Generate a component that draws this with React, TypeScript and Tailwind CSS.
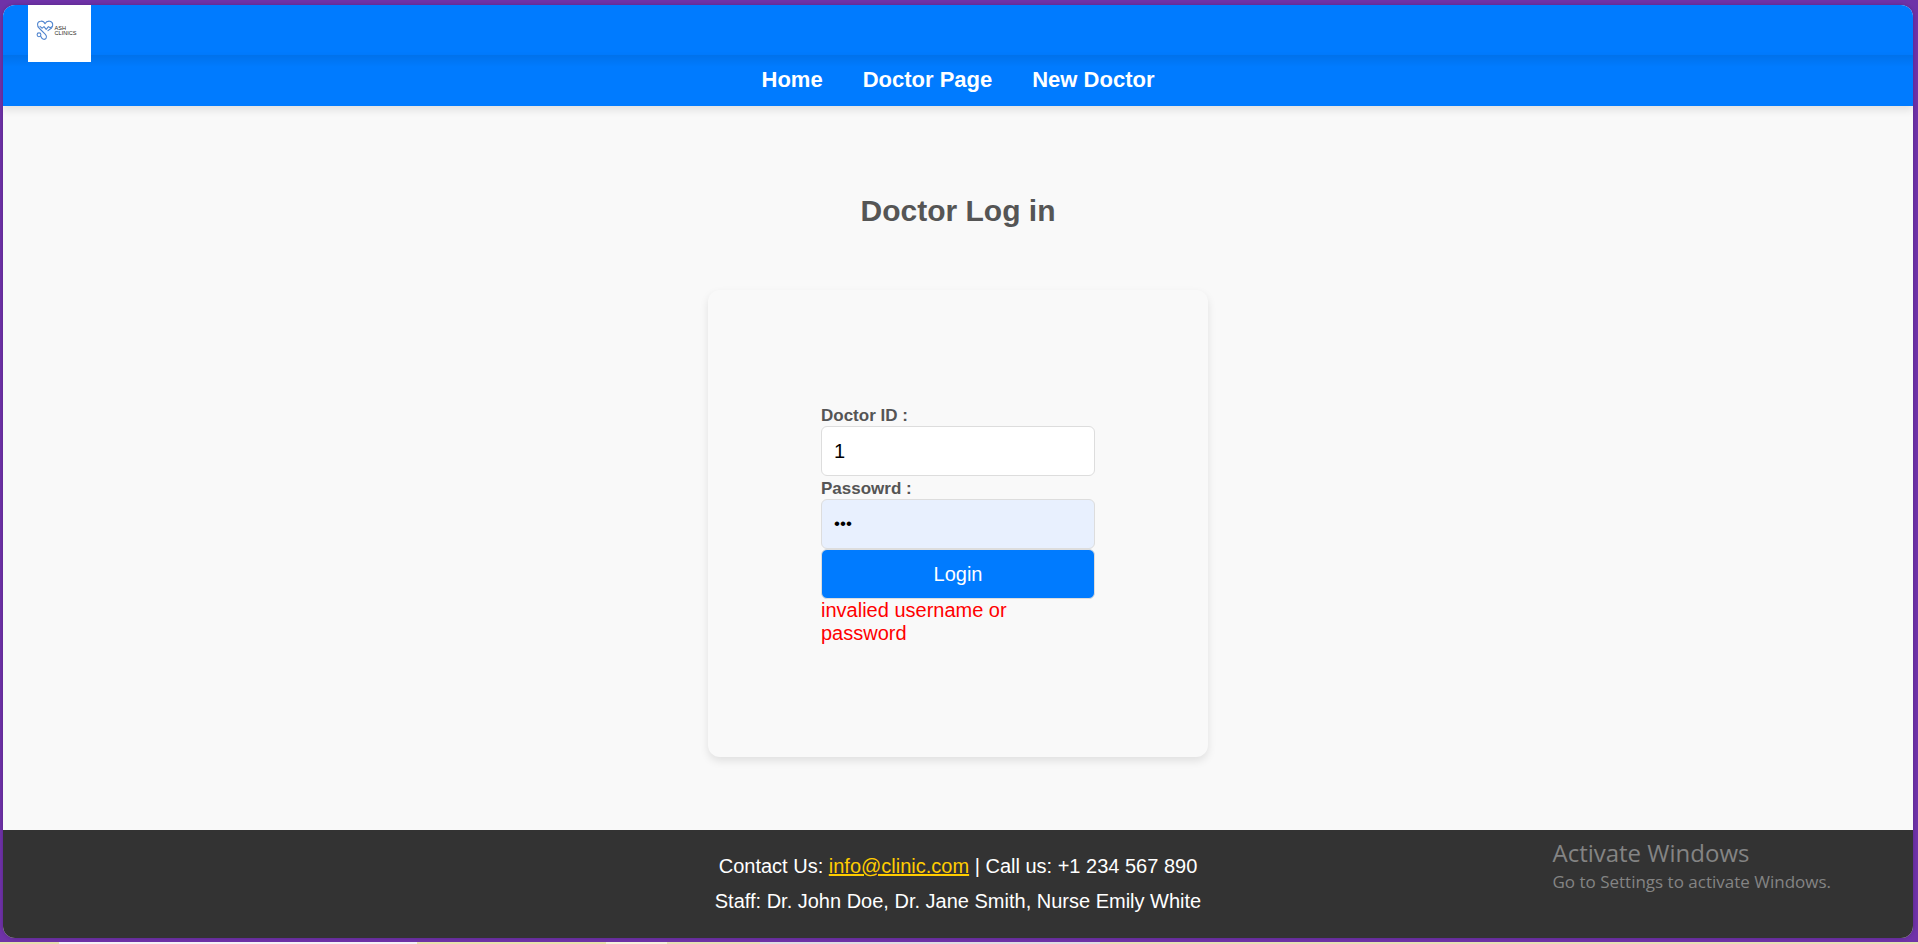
import { useState } from "react";

const navLinks = ["Home", "Doctor Page", "New Doctor"];

function Logo() {
  return (
    <a href="#home" aria-label="ASH Clinics" className="absolute left-[25px] top-0 block h-[57px] w-[63px] bg-white">
      <svg viewBox="0 0 63 57" className="h-full w-full">
        <g fill="none" stroke="#5286cf" strokeWidth="1.1" strokeLinecap="round" strokeLinejoin="round">
          <path d="M11.5 23.5C8.6 21 8.8 16.4 12.6 16.2C14.8 16 16.4 17.3 17 18.8C17.8 17.2 19.4 16 21.6 16.2C25.2 16.5 25.4 20.6 23.6 23L20 25.6" />
          <path d="M12 21.4L14.2 23.2L16 21.6L18.2 24.4L20.4 21.6L22.2 22.8L24 21.6" />
          <path d="M11.5 23.5L17.4 29.4C19.8 32 17.8 34.6 15.6 34.3C13.4 34 13.2 32 12.6 31" />
          <circle cx="11" cy="29.8" r="1.9" />
        </g>
        <g fill="#2b1f22" fontFamily="'Liberation Sans', Arial, sans-serif" fontSize="5.6">
          <text x="26.5" y="25">ASH</text>
          <text x="26.5" y="30">CLINICS</text>
        </g>
      </svg>
    </a>
  );
}

const fieldClass =
  "block h-[50px] w-full rounded-md border border-[#ddd] px-3 text-black outline-none";
const labelClass = "block pt-[2px] text-[17px] font-bold leading-[21px] text-[#555]";

function LoginForm() {
  const [doctorId, setDoctorId] = useState("1");
  const [password, setPassword] = useState("123");
  return (
    <form
      onSubmit={(e) => e.preventDefault()}
      className="w-[500px] max-w-full rounded-xl bg-[#f9f9f9] px-[113px] pb-[112px] pt-[113px] shadow-[0_4px_8px_rgba(0,0,0,0.1)]"
    >
      <label htmlFor="doctor-id" className={labelClass}>Doctor ID :</label>
      <input id="doctor-id" type="text" value={doctorId} onChange={(e) => setDoctorId(e.target.value)} className={`${fieldClass} bg-white text-[20px]`} />
      <label htmlFor="password" className={labelClass}>Passowrd :</label>
      <input id="password" type="password" value={password} onChange={(e) => setPassword(e.target.value)} className={`${fieldClass} bg-[#e8f0fe] text-[17px]`} />
      <button type="submit" className="block h-[50px] w-full rounded-md border border-[#ddd] bg-[#007bff] text-[20px] text-white">
        Login
      </button>
      <p role="alert" className="w-[200px] text-[20px] leading-[23px] text-[#f00]">invalied username or password</p>
    </form>
  );
}

export default function App() {
  return (
    <div className="relative flex min-h-screen flex-col bg-[#6f32a8] font-['Liberation_Sans',Arial,sans-serif]">
      <div className="mb-1 ml-[3px] mr-[5px] mt-[5px] flex grow flex-col overflow-hidden rounded-xl bg-[#f9f9f9] shadow-[0_0_4px_rgba(0,0,0,0.2)]">
        <header className="relative">
          <div className="h-[50px] bg-[#007bff]" />
          <nav className="flex h-[51px] items-center justify-center gap-10 bg-[#007bff] pb-[2px] shadow-[0_4px_8px_rgba(0,0,0,0.1)]">
            {navLinks.map((label) => (
              <a key={label} href="#" className="text-[22px] font-bold text-white">{label}</a>
            ))}
          </nav>
          <div className="absolute inset-x-0 top-[50px] h-3 bg-linear-to-b from-black/8 to-transparent" />
          <Logo />
        </header>
        <main className="flex grow flex-col items-center px-4 pb-[73px] pt-[85px]">
          <h1 className="mb-[59px] text-[30px] font-bold leading-10 text-[#555]">Doctor Log in</h1>
          <LoginForm />
        </main>
        <footer className="flex h-[108px] flex-col items-center justify-center bg-[#333] text-[20px] leading-[35px] text-white">
          <p>
            Contact Us: <a href="mailto:info@clinic.com" className="text-[#fc0] underline">info@clinic.com</a> | Call us: +1 234 567 890
          </p>
          <p>Staff: Dr. John Doe, Dr. Jane Smith, Nurse Emily White</p>
        </footer>
      </div>
      <div className="flex h-[2px]">
        <div className="w-[59px] bg-[#e6dfae]" />
        <div className="w-[358px] bg-[#f4f2f6]" />
        <div className="w-[189px] bg-[#e8e2ac]" />
        <div className="w-[61px] bg-[#f5f2dc]" />
        <div className="w-[93px] bg-[#e6e0b4]" />
        <div className="w-[340px] bg-[#dedde2]" />
        <div className="grow bg-[#e6e0b4]" />
      </div>
      <aside className="pointer-events-none absolute bottom-[50px] right-[87px] font-['Open_Sans','Noto_Sans',sans-serif] text-[#848484]">
        <p className="text-[24px] leading-[34px]">Activate Windows</p>
        <p className="text-[17px] leading-[24px]">Go to Settings to activate Windows.</p>
      </aside>
    </div>
  );
}
